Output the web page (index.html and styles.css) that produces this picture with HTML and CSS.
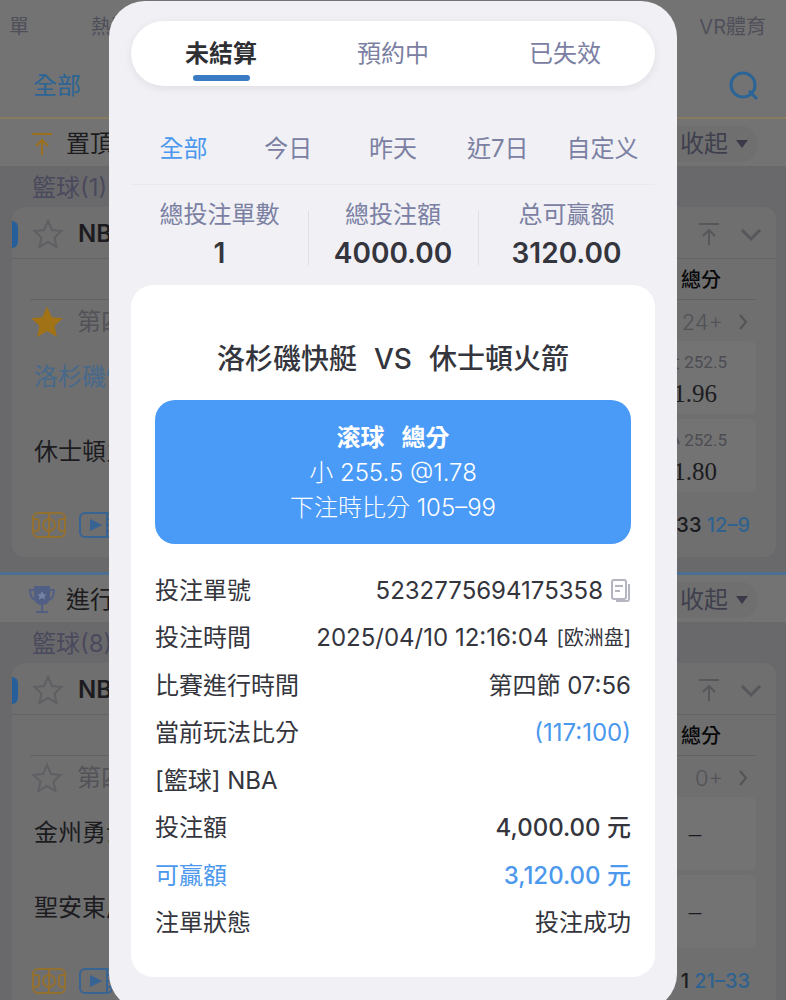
FILE: index.html
```html
<!DOCTYPE html>
<html lang="zh-Hant">
<head>
    <meta charset="UTF-8">
    <meta name="viewport" content="width=device-width, initial-scale=1.0">
    <title>投注記錄</title>
    <link rel="stylesheet" href="styles.css">
</head>
<body>

<!-- shared icons -->
<svg class="sprite" aria-hidden="true">
    <symbol id="star" viewBox="0 0 32 32"><path d="M16 3l4 9 9.500 1-7 6.500 2 9.500-8.500-5-8.500 5 2-9.500-7-6.500 9.500-1z"/></symbol>
    <symbol id="top" viewBox="0 0 22 24"><path d="M1 2h20M11 23V8M5 14l6-6 6 6"/></symbol>
    <symbol id="down" viewBox="0 0 22 24"><path d="M2 8l9 9 9-9"/></symbol>
    <symbol id="next" viewBox="0 0 10 16"><path d="M2 1l6 7-6 7"/></symbol>
    <symbol id="court" viewBox="0 0 36 28"><rect x="2" y="2" width="32" height="24" rx="5"/><path d="M18 2v24M2 8h3q3 0 3 3v6q0 3-3 3H2M34 8h-3q-3 0-3 3v6q0 3 3 3h3"/><circle cx="18" cy="14" r="6"/></symbol>
    <symbol id="video" viewBox="0 0 36 28"><rect x="2" y="2" width="32" height="24" rx="5"/><path d="M29 2v24M29 8h5M29 14h5M29 20h5"/><path class="solid" d="M13 9.500l9 4.500-9 4.500z"/></symbol>
</svg>

<div class="page">
    <nav class="sports">
        <a href="#">單</a>
        <a href="#">熱門</a>
        <a href="#" class="last">VR體育</a>
    </nav>
    <div class="filter">
        <a href="#">全部</a>
        <button class="search" aria-label="搜尋">
            <svg viewBox="0 0 30 30"><circle cx="14" cy="14" r="12"/><path d="M20 20l8 8"/></svg>
        </button>
    </div>

    <section class="group">
        <header class="group-bar">
            <svg class="group-icon pin"><use href="#top"/></svg>
            <h2>置頂</h2>
            <button class="fold">收起 <i></i></button>
        </header>
        <h3>籃球(1)</h3>
        <div class="league">
            <div class="league-head">
                <button class="star" aria-label="收藏"><svg><use href="#star"/></svg></button>
                <b>NBA</b>
                <button class="tool" aria-label="置頂"><svg><use href="#top"/></svg></button>
                <button class="tool bold" aria-label="展開"><svg><use href="#down"/></svg></button>
            </div>
            <div class="columns">總分</div>
            <div class="status">
                <button class="star on" aria-label="收藏"><svg><use href="#star"/></svg></button>
                <span>第四節</span>
                <a href="#">24+ <svg><use href="#next"/></svg></a>
            </div>
            <div class="match">
                <div class="teams"><span class="lead">洛杉磯快艇</span><span>休士頓火箭</span></div>
                <div class="odds">
                    <button><small>大 252.5</small>1.96</button>
                    <button><small>小 252.5</small>1.80</button>
                </div>
            </div>
            <div class="league-foot">
                <svg class="court"><use href="#court"/></svg>
                <svg class="video"><use href="#video"/></svg>
                <span>33 <em>12–9</em></span>
            </div>
        </div>
    </section>

    <section class="group live">
        <header class="group-bar">
            <svg class="group-icon trophy" viewBox="0 0 26 28">
                <path class="cup" d="M6 1h14v9q0 8-7 8t-7-8z"/>
                <path class="handle" d="M6 4H1q0 9 6 10M20 4h5q0 9-6 10M13 18v7M7 26h12"/>
                <path class="mark" d="M13 5l1.500 3 3 .5-2 2 .5 3-3-1.500-3 1.500.5-3-2-2 3-.5z"/>
            </svg>
            <h2>進行中</h2>
            <button class="fold">收起 <i></i></button>
        </header>
        <h3>籃球(8)</h3>
        <div class="league">
            <div class="league-head">
                <button class="star" aria-label="收藏"><svg><use href="#star"/></svg></button>
                <b>NBA</b>
                <button class="tool" aria-label="置頂"><svg><use href="#top"/></svg></button>
                <button class="tool bold" aria-label="展開"><svg><use href="#down"/></svg></button>
            </div>
            <div class="columns">總分</div>
            <div class="status">
                <button class="star" aria-label="收藏"><svg><use href="#star"/></svg></button>
                <span>第四節</span>
                <a href="#">0+ <svg><use href="#next"/></svg></a>
            </div>
            <div class="match">
                <div class="teams"><span>金州勇士</span><span>聖安東尼奧</span></div>
                <div class="odds">
                    <button>–</button>
                    <button>–</button>
                </div>
            </div>
            <div class="league-foot">
                <svg class="court"><use href="#court"/></svg>
                <svg class="video"><use href="#video"/></svg>
                <span>1 <em>21–33</em></span>
            </div>
        </div>
    </section>
</div>

<main class="modal">
    <nav class="tabs">
        <button class="active">未結算</button>
        <button>預約中</button>
        <button>已失效</button>
    </nav>
    <nav class="dates">
        <button class="active">全部</button>
        <button>今日</button>
        <button>昨天</button>
        <button>近7日</button>
        <button>自定义</button>
    </nav>
    <div class="totals">
        <div><span>總投注單數</span><b>1</b></div>
        <div><span>總投注額</span><b>4000.00</b></div>
        <div><span>总可赢额</span><b>3120.00</b></div>
    </div>
    <article class="ticket">
        <h1><span>洛杉磯快艇</span><span>VS</span><span>休士頓火箭</span></h1>
        <div class="pick">
            <b><span>滚球</span><span>總分</span></b>
            <p>小 255.5 @1.78</p>
            <p>下注時比分 105–99</p>
        </div>
        <dl class="details">
            <div>
                <dt>投注單號</dt>
                <dd>5232775694175358
                    <button class="copy" aria-label="複製">
                        <svg viewBox="0 0 20 24"><rect x="1" y="1" width="14" height="19" rx="2"/><path d="M4 7h8M4 12h5M18 5v15q0 2-2 2H5"/></svg>
                    </button>
                </dd>
            </div>
            <div><dt>投注時間</dt><dd>2025/04/10 12:16:04 <small>[欧洲盘]</small></dd></div>
            <div><dt>比賽進行時間</dt><dd>第四節 07:56</dd></div>
            <div><dt>當前玩法比分</dt><dd class="blue">(117:100)</dd></div>
            <div><dt>[籃球] NBA</dt></div>
            <div><dt>投注額</dt><dd class="money">4,000.00 元</dd></div>
            <div class="blue"><dt>可贏額</dt><dd class="money">3,120.00 元</dd></div>
            <div><dt>注單狀態</dt><dd>投注成功</dd></div>
        </dl>
    </article>
</main>

</body>
</html>
```
FILE: styles.css
```css
* {
    box-sizing: border-box;
}
body {
    margin: 0;
    height: 100vh;
    overflow: hidden;
    position: relative;
    font-family: Inter, "Noto Sans CJK TC", sans-serif;
    font-size: 24px;
    line-height: 36px;
    background: #737373;
    color: #1c1c20;
}
button {
    font: inherit;
    color: inherit;
    background: none;
    border: none;
    padding: 0;
    cursor: pointer;
}
a {
    color: inherit;
    text-decoration: none;
}
h1, h2, h3, p, dl, dd {
    margin: 0;
    font-weight: 400;
}
svg {
    display: block;
    fill: none;
    stroke: currentColor;
    stroke-width: 2;
}
.sprite {
    position: absolute;
    width: 0;
    height: 0;
}

/* page behind the modal */
.page {
    height: 100%;
    overflow: hidden;
    background: #69696c;
}
.sports {
    display: flex;
    gap: 62px;
    height: 52px;
    align-items: center;
    padding: 2px 20px 0 9px;
    font-size: 20px;
    color: #4f4f59;
    background: #737373;
}
.sports .last {
    margin-left: auto;
}
.filter {
    display: flex;
    justify-content: space-between;
    align-items: center;
    height: 65px;
    padding: 2px 27px 0 33px;
    color: #2b6496;
    background: #737373;
}
.search svg {
    width: 30px;
    height: 30px;
    stroke-width: 3;
}
.group {
    border-top: 2px solid #877b5f;
}
.group.live {
    border-top: 3px solid #4b6f90;
}
.group-bar {
    display: flex;
    align-items: center;
    height: 47px;
    padding: 2px 28px 0;
    background: #737373;
}
.group-icon {
    width: 28px;
    height: 28px;
    margin-right: 10px;
}
.pin {
    padding: 2px;
    color: #9c6f1c;
}
.trophy {
    color: #525f84;
}
.cup {
    fill: #525f84;
}
.mark {
    fill: #7582a5;
    stroke: none;
}
.group h2 {
    font-size: 24px;
}
.fold {
    display: flex;
    align-items: center;
    gap: 8px;
    margin-left: auto;
    padding: 0 10px 0 16px;
    border-radius: 18px;
    background: #6f6f70;
    color: #3f3f4d;
}
.fold i {
    border: 6px solid transparent;
    border-top: 8px solid #3a3a4a;
    border-bottom: 0;
}
.group h3 {
    padding: 4px 32px 1px;
    font-size: 24px;
    color: #4a4a5c;
}
.league {
    margin: 0 10px 15px 12px;
    border-radius: 12px;
    background: #6f6f70;
}
.league-head {
    display: flex;
    align-items: center;
    gap: 20px;
    height: 52px;
    padding: 3px 14px 0 0;
    border-bottom: 1px solid #636368;
}
.league-head::before {
    content: "";
    width: 6px;
    height: 27px;
    border-radius: 0 6px 6px 0;
    background: #265f9a;
}
.league-head b {
    margin-right: auto;
    font-size: 24px;
    font-weight: 600;
}
.star {
    color: #5f5f64;
}
.star svg {
    width: 32px;
    height: 32px;
}
.league-head .star {
    margin: 0 -6px;
}
.star.on {
    color: #a17216;
}
.star.on svg {
    fill: currentColor;
}
.tool {
    color: #56565b;
}
.tool svg {
    width: 22px;
    height: 24px;
}
.bold svg {
    stroke-width: 3;
}
.columns {
    height: 41px;
    margin: 0 20px 0 18px;
    padding: 3px 35px 0 0;
    text-align: right;
    font-size: 20px;
    font-weight: 500;
    color: #08080a;
    border-bottom: 1px solid #626267;
}
.status {
    display: flex;
    align-items: center;
    gap: 14px;
    height: 41px;
    padding: 2px 28px 0 19px;
    color: #525257;
}
.status a {
    display: flex;
    align-items: center;
    gap: 15px;
    margin-left: auto;
    font-size: 22px;
    font-weight: 300;
}
.status a svg {
    width: 10px;
    height: 16px;
}
.match {
    display: flex;
    justify-content: space-between;
    padding: 0 20px 0 22px;
}
.teams {
    display: flex;
    flex-direction: column;
    gap: 39px;
    padding-top: 18px;
}
.lead {
    color: #46698c;
}
.odds {
    display: grid;
    gap: 5px;
    width: 116px;
}
.odds button {
    height: 73px;
    padding-right: 6px;
    border-radius: 6px;
    background: #737373;
    font-family: "Liberation Serif", serif;
    font-size: 25px;
    line-height: 31px;
}
.odds small {
    display: block;
    font-family: Roboto, "Noto Sans CJK TC", sans-serif;
    font-size: 17px;
    color: #4c4c52;
}
.league-foot {
    display: flex;
    align-items: center;
    gap: 11px;
    height: 65px;
    padding: 0 26px 0 19px;
    font-size: 20px;
    font-weight: 500;
}
.league-foot svg {
    width: 36px;
    height: 28px;
}
.court {
    color: #93702f;
}
.video {
    color: #386494;
}
.solid {
    fill: currentColor;
}
.league-foot span {
    margin-left: auto;
}
.league-foot em {
    font-style: normal;
    color: #30628f;
}

/* bet record modal */
.modal {
    position: absolute;
    top: 1px;
    left: 109px;
    right: 109px;
    padding: 20px 22px 33px;
    border-radius: 36px;
    background: #f0f0f5;
    color: #34353d;
}
.tabs {
    display: flex;
    height: 65px;
    padding: 0 4px;
    border-radius: 33px;
    background: #fff;
    box-shadow: 0 2px 8px rgba(0, 0, 0, 0.08);
    color: #7b80a3;
}
.tabs button {
    flex: 1;
}
.tabs .active {
    display: flex;
    flex-direction: column;
    align-items: center;
    padding-top: 15px;
    font-weight: 700;
    color: #2e2f33;
}
.tabs .active::after {
    content: "";
    width: 57px;
    height: 6px;
    margin-top: 3px;
    border-radius: 3px;
    background: #3b7bc4;
}
.dates {
    display: flex;
    margin-top: 26px;
    height: 73px;
    border-bottom: 1px solid #e9e9ee;
    color: #7b80a3;
}
.dates button {
    flex: 1;
    padding-top: 2px;
}
.dates .active, .blue {
    color: #4b98ed;
}
.totals {
    display: grid;
    grid-template-columns: 1fr 170px 1fr;
    padding: 12px 0 20px;
    text-align: center;
}
.totals div {
    display: flex;
    flex-direction: column;
    height: 68px;
}
.totals div + div {
    background: linear-gradient(#dfdfe6, #dfdfe6) left bottom / 1px 54px no-repeat;
}
.totals span {
    color: #7b80a3;
}
.totals b {
    font-size: 28px;
    font-weight: 600;
    line-height: 40px;
}
.ticket {
    padding: 54px 24px 30px;
    border-radius: 22px;
    background: #fff;
}
.ticket h1 {
    display: flex;
    justify-content: center;
    gap: 17px;
    font-size: 28px;
    font-weight: 500;
    line-height: 40px;
}
.pick {
    margin: 21px 0 23px;
    padding: 20px 0 19px;
    border-radius: 20px;
    background: #4a9af7;
    color: #fff;
    text-align: center;
    line-height: 35px;
}
.pick b {
    display: flex;
    justify-content: center;
    gap: 17px;
}
.pick p {
    font-weight: 300;
}
.details {
    display: grid;
    grid-auto-rows: 1fr;
    min-height: 380px;
}
.details div, .details dd {
    display: flex;
    align-items: center;
    gap: 8px;
}
.details div {
    justify-content: space-between;
}
.details small {
    font-size: 20px;
}
.money {
    font-weight: 500;
}
.copy {
    color: #b5b5c0;
}
.copy svg {
    width: 20px;
    height: 24px;
}
```
